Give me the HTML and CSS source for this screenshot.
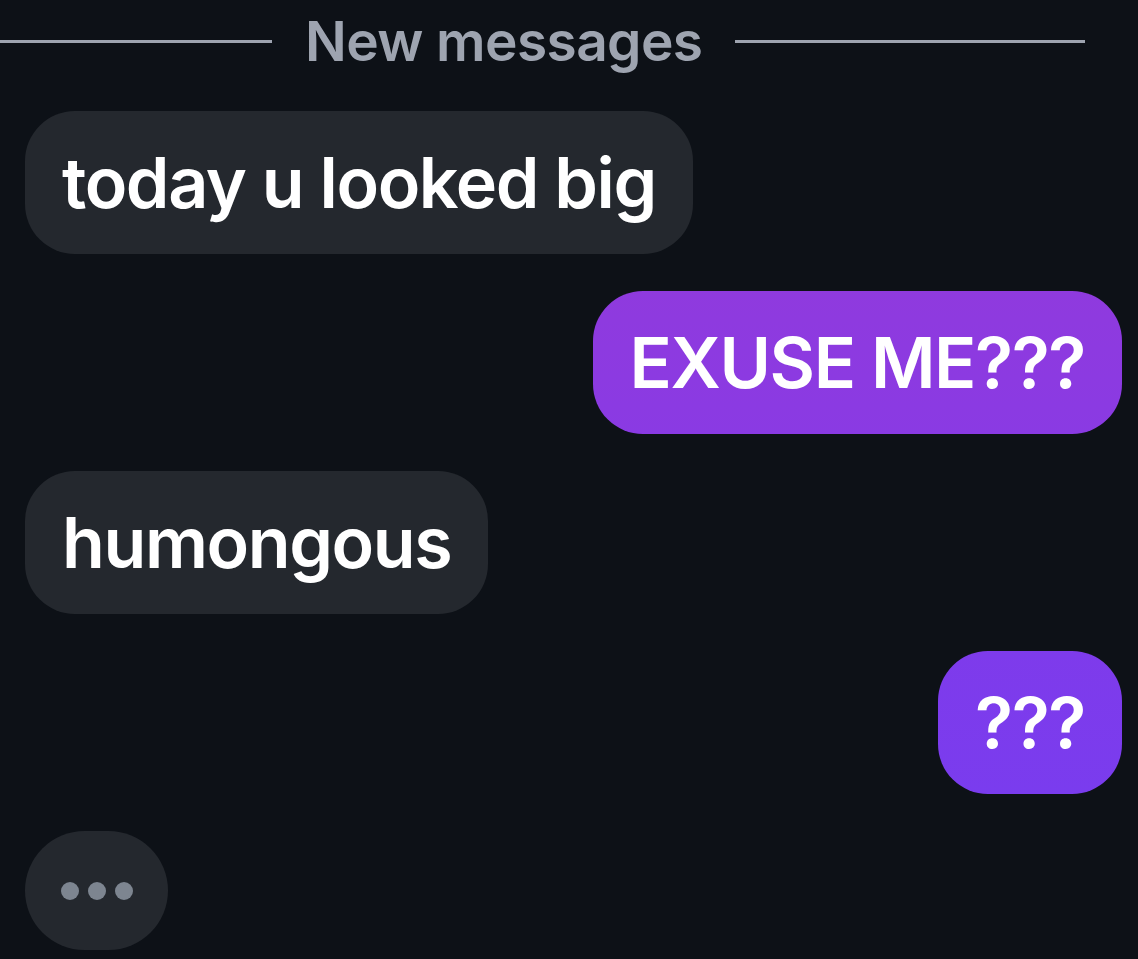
FILE: index.html
```html
<!DOCTYPE html>
<html>
<head>
<meta charset="utf-8">
<link rel="stylesheet" href="styles.css">
</head>
<body>
<div class="chat">
  <div class="divider">
    <span class="line line-left"></span>
    <span class="divider-text">New messages</span>
    <span class="line line-right"></span>
  </div>
  <div class="messages">
    <div class="row in"><div class="bubble gray">today u looked big</div></div>
    <div class="row out"><div class="bubble purple p1">EXUSE ME???</div></div>
    <div class="row in"><div class="bubble gray">humongous</div></div>
    <div class="row out"><div class="bubble purple p2">???</div></div>
    <div class="row in"><div class="bubble gray typing"><span class="dot"></span><span class="dot"></span><span class="dot"></span></div></div>
  </div>
</div>
</body>
</html>
```
FILE: styles.css
```css
html, body {
  margin: 0;
  padding: 0;
  background: #0d1117;
  width: 1138px;
  height: 959px;
  overflow: hidden;
  font-family: Inter, "Noto Sans", sans-serif;
}
.chat {
  display: flex;
  flex-direction: column;
}
.divider {
  display: flex;
  align-items: center;
  gap: 33px;
  height: 82px;
}
.line {
  display: block;
  height: 3px;
  background: #9ea4b0;
}
.line-left { width: 272px; }
.line-right { width: 350px; }
.divider-text {
  color: #9ea4b0;
  font-size: 55px;
  font-weight: 600;
  letter-spacing: -0.6px;
  line-height: 1;
}
.messages {
  display: flex;
  flex-direction: column;
  gap: 37px;
  padding: 29px 16px 0 25px;
}
.row { display: flex; }
.row.in { justify-content: flex-start; }
.row.out { justify-content: flex-end; }
.bubble {
  height: 143px;
  box-sizing: border-box;
  padding: 0 37px;
  border-radius: 50px;
  display: flex;
  align-items: center;
  font-size: 70px;
  font-weight: 600;
  letter-spacing: -1.4px;
  color: #ffffff;
}
.gray { background: #24282e; }
.purple.p1 { background: linear-gradient(180deg, #8f3ade 0%, #8a3ae3 100%); }
.purple.p2 { background: linear-gradient(180deg, #7e3beb 0%, #7a3cee 100%); }
.typing {
  height: 119px;
  width: 143px;
  padding: 0;
  justify-content: center;
  gap: 9px;
  border-radius: 60px;
}
.dot {
  width: 18px;
  height: 18px;
  border-radius: 50%;
  background: #7d8590;
}
```
